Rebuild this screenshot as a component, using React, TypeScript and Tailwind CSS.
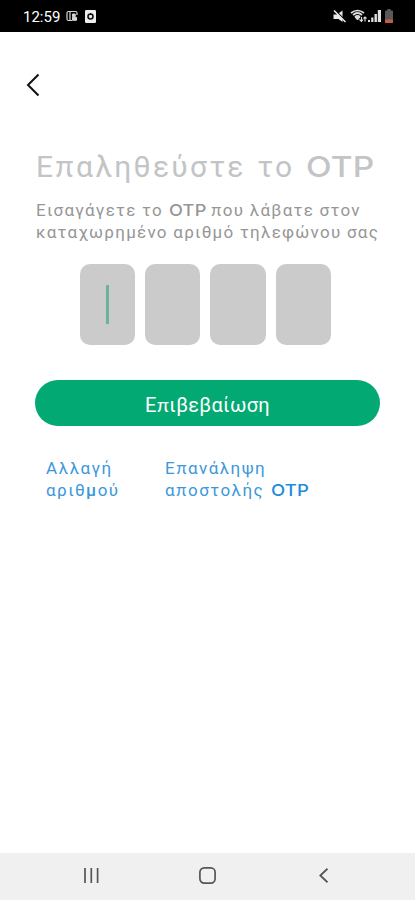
import type { ReactNode } from 'react';

const digits = [0, 1, 2, 3];

function Otp({ className = '' }: { className?: string }) {
  return (
    <span className={`inline-block origin-left font-['Inter'] font-medium leading-none tracking-[0.2px] ${className}`}>OTP</span>
  );
}

function Pi() {
  return <span className="font-['Lato','Roboto'] leading-none">π</span>;
}

function Mu() {
  return <span className="font-medium">μ</span>;
}

function Line({ children, className = '' }: { children: ReactNode; className?: string }) {
  return <span className={`block whitespace-nowrap ${className}`}>{children}</span>;
}

function StatusBar() {
  return (
    <header className="flex h-8 shrink-0 items-center bg-black pl-[23px] pr-[22px] text-white">
      <span className="w-[38px] whitespace-nowrap pt-px text-[15px] leading-8">12:59</span>

      {/* Notifications */}
      <svg className="ml-[5px] h-3 w-3" viewBox="0 0 12 12" fill="none" stroke="#d6d6d6">
        <path d="M6 10.5H2.5a1.5 1.5 0 0 1-1.5-1.5V3a1.5 1.5 0 0 1 1.5-1.5h7A1.5 1.5 0 0 1 11 3v2M4 1.5v9" strokeWidth="1.2" />
        <path d="M6.5 4h2.7v2.5H6.5zM6.5 7.3h4v3h-4z" fill="#d6d6d6" />
      </svg>
      <svg className="ml-[7px] h-[13px] w-[11px]" viewBox="0 0 11 13">
        <rect width="11" height="13" rx="1.2" fill="#eeeeee" />
        <circle cx="5.5" cy="6.5" r="2.5" fill="none" stroke="#111" strokeWidth="1.6" />
        <path d="M5.5 3v2" stroke="#111" />
      </svg>

      {/* Sound, network and battery */}
      <svg className="ml-auto h-[13px] w-[13px]" viewBox="0 0 13 13">
        <path d="M0.5 4.5h3.5L9.5 0.5v11.5L5.5 9H0.5z" fill="#e8e8e8" />
        <path d="M2 0l11 11" stroke="#000" strokeWidth="1.2" />
        <path d="M1 0.5l11.5 11.5" stroke="#e8e8e8" strokeWidth="1.5" />
      </svg>
      <svg className="ml-[4px] h-[14px] w-[17px]" viewBox="0 0 17 14" fill="none" stroke="#dedede">
        <path d="M1 4Q7.5-1 14 4M3 6Q7.5 2 12 6M5 8q2.5-2.3 5 0" strokeWidth="1.7" />
        <path d="M5 8h5L7.5 11z" fill="#dedede" />
        <path d="M11.5 8v4.5M9.5 10.5l2 2 1.5-2M15 12.5V8M13.5 9.5L15 8l1.5 1.5" strokeWidth="1.1" />
      </svg>
      <svg className="ml-px h-3 w-[13px]" viewBox="0 0 13 12" fill="#e2e2e2">
        <path d="M0 10h2v2H0zM3.2 7.5h2.2V12H3.2zM6.5 4h2.4v8H6.5zM9.8 0h3.2v12H9.8z" />
      </svg>
      <svg className="ml-[4px] h-[14px] w-[8px]" viewBox="0 0 9 14" preserveAspectRatio="none">
        <path d="M2.7 0h3.6v1.5H8q1 0 1 1V13q0 1-1 1H1q-1 0-1-1V2.5q0-1 1-1h1.7z" fill="#595959" />
        <path d="M0 10.5h9V13q0 1-1 1H1q-1 0-1-1z" fill="#c75b46" />
      </svg>
    </header>
  );
}

function NavigationBar() {
  return (
    <nav className="flex h-[47px] shrink-0 items-center bg-[#f0f0f0] pb-[2px] pl-[83px] pr-[87px] text-[#555555]">
      <svg className="h-[15px] w-4" viewBox="0 0 16 15" stroke="currentColor" strokeWidth="1.7">
        <path d="M2 0v15M8.3 0v15M14.6 0v15" />
      </svg>
      <svg className="ml-[100px] h-[17px] w-[17px]" viewBox="0 0 17 17" fill="none" stroke="currentColor" strokeWidth="1.7">
        <rect x="0.9" y="0.9" width="15.2" height="15.2" rx="4.3" />
      </svg>
      <svg className="ml-auto h-[15px] w-[9px]" viewBox="0 0 9 15" fill="none" stroke="currentColor" strokeWidth="1.8">
        <path d="M8.5 0.7L1.3 7.5l7.2 6.8" />
      </svg>
    </nav>
  );
}

export default function App() {
  return (
    <div className="flex h-[900px] w-full flex-col overflow-hidden bg-white font-['Roboto',sans-serif]">
      <StatusBar />

      <main className="flex-1 pt-[41px]">
        <button type="button" aria-label="Πίσω" className="ml-[26px] block">
          <svg className="h-6 w-[14px]" viewBox="0 0 14 24" fill="none" stroke="#111111" strokeWidth="2">
            <path d="M12.5 1.5L2 12l10.5 10.5" />
          </svg>
        </button>

        <h1 className="ml-[36px] mt-[50px] h-[40px] text-[30px] leading-[40px] tracking-[2.25px] text-[#c2c4c5] [word-spacing:2px]">
          <Line>
            Ε<Pi />αληθεύστε το <Otp className="scale-x-[1.15] text-[29px]" />
          </Line>
        </h1>
        <p className="ml-[36px] mt-[12px] h-[44px] text-[17px] leading-[22px] tracking-[1.26px] text-[#969696]">
          <Line>
            Εισαγάγετε το <Otp className="mr-[3px] scale-x-[1.1] text-[16.5px]" /> <Pi />ου λάβατε στον
          </Line>
          <Line>καταχωρημένο αριθμό τηλεφώνου σας</Line>
        </p>

        {/* Code fields, caret in the first one */}
        <div className="ml-[79.5px] mt-[21px] flex gap-[10px]">
          {digits.map((digit) => (
            <div key={digit} className="flex h-[81px] w-[55.4px] items-center justify-center rounded-[10px] bg-[#cbcbcb]">
              {digit === 0 && <span className="ml-px h-[39px] w-[3px] bg-[#6bb49b]" />}
            </div>
          ))}
        </div>

        <button
          type="button"
          className="ml-[35px] mt-[35px] flex h-[46px] w-[345px] items-center justify-center rounded-full bg-[#03a973] pt-[4px] text-[20px] tracking-[0.3px] text-white"
        >
          <Line>
            Ε<Pi />ιβεβαίωση
          </Line>
        </button>

        <div className="ml-[46px] mt-[31px] flex text-[17px] leading-[22px] tracking-[1.45px] text-[#3c98da]">
          <a href="#" className="w-[119px]">
            <Line>Αλλαγή</Line>
            <Line>
              αριθ
              <Mu />
              ού
            </Line>
          </a>
          <a href="#">
            <Line>
              Ε<Pi />ανάληψη
            </Line>
            <Line>
              α<Pi />οστολής <Otp className="ml-px scale-x-[1.12] text-[16.5px] text-[#1d8bdc]" />
            </Line>
          </a>
        </div>
      </main>

      <NavigationBar />
    </div>
  );
}
